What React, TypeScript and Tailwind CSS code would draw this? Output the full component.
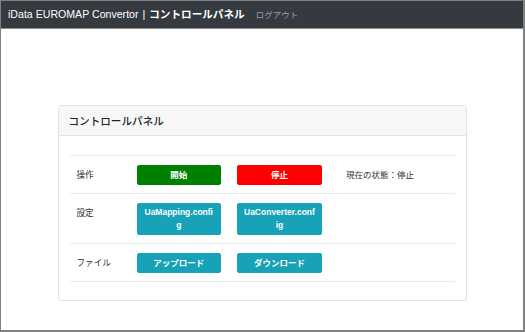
import React from "react";

const font = "font-['Liberation_Sans','Noto_Sans_CJK_JP',sans-serif]";
const ja = "font-['Noto_Sans_CJK_JP',sans-serif]";

function Btn({ color, h, jp, children }: { color: string; h: string; jp?: boolean; children: React.ReactNode }) {
  return (
    <div
      className={`flex w-[84.5px] flex-col justify-center overflow-hidden rounded-[2px] border px-[5px] text-center text-[8.5px] font-bold leading-[12.5px] text-white [word-break:break-all] ${h} ${color} ${jp ? ja : ""}`}
    >
      <div>{children}</div>
    </div>
  );
}

function Row({ label, children }: { label: string; children: React.ReactNode }) {
  return (
    <div className="flex items-start border-t border-[#e9ebed] py-[8.5px]">
      <div className={`${ja} h-[12.5px] w-[59px] pl-[7px] mt-[3.5px] text-[8.6px] leading-[12.5px] text-[#333]`}>{label}</div>
      {children}
    </div>
  );
}

function Cell({ children }: { children: React.ReactNode }) {
  return <div className="w-[100.7px] shrink-0 px-[8px]">{children}</div>;
}

export default function App() {
  return (
    <div className={`${font} h-[332px] w-[525px] overflow-hidden border-l border-t border-r-2 border-b-2 border-[#808080] bg-white`}>
      <div className="flex h-[28px] items-center border-b border-[#8c8c8c] bg-[#343a40] pl-[7px]">
        <div className="text-[10.6px] text-white">
          iData EUROMAP Convertor<span className="mx-[4px]">|</span>
          <span className="font-bold">コントロールパネル</span>
        </div>
        <div className={`${ja} ml-[11px] text-[8.5px] text-[#9a9da0]`}>ログアウト</div>
      </div>
      <div className="mx-auto mt-[76px] w-[409px] rounded-[3px] border border-[#e3e3e3]">
        <div className={`${ja} flex h-[30px] items-center border-b border-[#e3e3e3] bg-[#f7f7f7] pl-[10px] text-[10.6px] font-medium text-[#212529]`}>
          コントロールパネル
        </div>
        <div className="px-[11px] pb-[18px] pt-[19px]">
          <Row label="操作">
            <Cell>
              <Btn h="h-[20px]" jp color="bg-[#008000] border-[#008000]">開始</Btn>
            </Cell>
            <Cell>
              <Btn h="h-[20px]" jp color="bg-[#ff0000] border-[#ff0000]">停止</Btn>
            </Cell>
            <div className={`${ja} h-[12.5px] pl-[16px] mt-[3.5px] text-[8.5px] leading-[12.5px] text-[#333]`}>現在の状態：停止</div>
          </Row>
          <Row label="設定">
            <Cell>
              <Btn h="h-[32px]" color="bg-[#17a2b8] border-[#17a2b8]">UaMapping.config</Btn>
            </Cell>
            <Cell>
              <Btn h="h-[32px]" color="bg-[#17a2b8] border-[#17a2b8]">UaConverter.config</Btn>
            </Cell>
          </Row>
          <Row label="ファイル">
            <Cell>
              <Btn h="h-[20px]" jp color="bg-[#17a2b8] border-[#17a2b8]">アップロード</Btn>
            </Cell>
            <Cell>
              <Btn h="h-[20px]" jp color="bg-[#17a2b8] border-[#17a2b8]">ダウンロード</Btn>
            </Cell>
          </Row>
          <div className="border-t border-[#e9ebed]" />
        </div>
      </div>
    </div>
  );
}
